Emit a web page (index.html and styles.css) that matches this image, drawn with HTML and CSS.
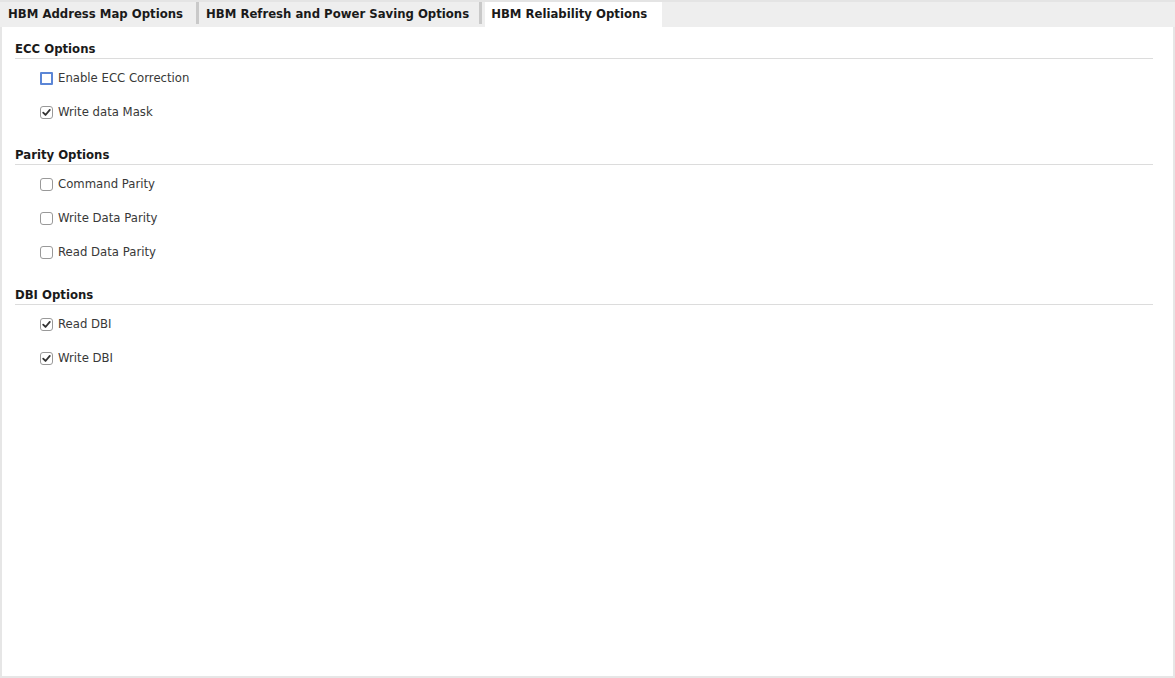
FILE: index.html
```html
<!DOCTYPE html>
<html>

<head>

    <meta charset="utf-8">
    <title>HBM Reliability Options</title>

    <link rel="stylesheet" href="styles.css">

</head>

<body>

    <div id="frame">
        <div class="tabs">
            <div class="tab first">HBM Address Map Options</div>
            <div class="sep"></div>
            <div class="tab">HBM Refresh and Power Saving Options</div>
            <div class="sep"></div>
            <div class="tab active">HBM Reliability Options</div>
        </div>

        <div id="page">
            <div class="group">
                <h3>ECC Options</h3>
                <div class="row">
                    <span class="box focus"></span>
                    <span class="label">Enable ECC Correction</span>
                </div>
                <div class="row">
                    <span class="box"><svg viewBox="0 0 12 12"><path d="M2.4 6.2 L4.9 8.7 L9.6 3.2" /></svg></span>
                    <span class="label">Write data Mask</span>
                </div>
            </div>

            <div class="group">
                <h3>Parity Options</h3>
                <div class="row">
                    <span class="box"></span>
                    <span class="label">Command Parity</span>
                </div>
                <div class="row">
                    <span class="box"></span>
                    <span class="label">Write Data Parity</span>
                </div>
                <div class="row">
                    <span class="box"></span>
                    <span class="label">Read Data Parity</span>
                </div>
            </div>

            <div class="group">
                <h3>DBI Options</h3>
                <div class="row">
                    <span class="box"><svg viewBox="0 0 12 12"><path d="M2.4 6.2 L4.9 8.7 L9.6 3.2" /></svg></span>
                    <span class="label">Read DBI</span>
                </div>
                <div class="row">
                    <span class="box"><svg viewBox="0 0 12 12"><path d="M2.4 6.2 L4.9 8.7 L9.6 3.2" /></svg></span>
                    <span class="label">Write DBI</span>
                </div>
            </div>
        </div>
    </div>

</body>

</html>
```

FILE: styles.css
```css
* {
    margin: 0px;
    padding: 0px;
    box-sizing: border-box;
}

html,
body {
    height: 100%;
}

body {
    font-family: "DejaVu Sans", "Liberation Sans", sans-serif;
    font-size: 11.7px;
    color: #222222;
    background: #e6e6e6;
}

#frame {
    height: 100%;
    display: flex;
    flex-direction: column;
}

.tabs {
    display: flex;
    align-items: stretch;
    height: 27px;
    background: #eeeeee;
    border-top: 2px solid #e4e4e4;
}

.tab {
    display: flex;
    align-items: center;
    padding: 0px 10px 2px 7px;
    font-weight: bold;
    color: #1a1a1a;
    white-space: nowrap;
}

.tab.first {
    padding-left: 8px;
    padding-right: 13px;
}

.tab.active {
    background: #ffffff;
    padding: 0px 15px 2px 6px;
    margin-left: 3px;
}

.sep {
    width: 3px;
    margin-bottom: 3px;
    background: #c9c9c9;
}

#page {
    flex: 1;
    background: #ffffff;
    margin: 0px 2px 2px 2px;
    padding: 14px 20px 0px 13px;
}

.group {
    margin-bottom: 18px;
}

h3 {
    font-size: 11.7px;
    font-weight: bold;
    line-height: 16px;
    color: #1a1a1a;
    padding-bottom: 1px;
    border-bottom: 1px solid #dcdcdc;
    margin-bottom: 2px;
}

.row {
    display: flex;
    align-items: center;
    height: 34px;
    padding-left: 25px;
}

.box {
    width: 13px;
    height: 13px;
    border: 1px solid #999999;
    border-radius: 3px;
    background: #ffffff;
    margin-right: 5px;
    display: flex;
    align-items: center;
    justify-content: center;
}

.box.focus {
    border: 2px solid #5b86d6;
    border-radius: 1px;
}

.box svg {
    width: 11px;
    height: 11px;
}

.box path {
    fill: none;
    stroke: #333333;
    stroke-width: 2;
    stroke-linecap: round;
    stroke-linejoin: round;
}

.label {
    color: #383838;
}
```
